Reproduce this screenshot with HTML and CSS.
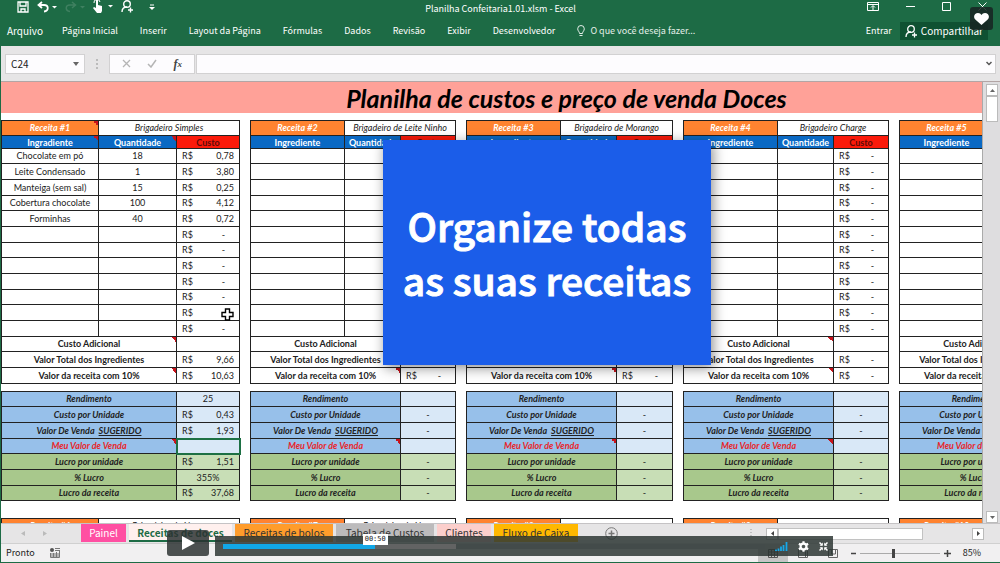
FILE: index.html
```html
<!DOCTYPE html>
<html lang="pt-BR">
<head>
<meta charset="utf-8">
<title>Planilha Confeitaria1.01.xlsm - Excel</title>
<link rel="stylesheet" href="styles.css">
</head>
<body>
<header class="top">
  <div class="titlebar">
    <div class="quick">
      <button class="ico" aria-label="Salvar"><svg width="12" height="12" viewBox="0 0 12 12"><path d="M1 1h10v10H1zM3 1v4h6V1M4 11V8h4v3" fill="none" stroke="#fff" stroke-width="1.3"/></svg></button>
      <button class="ico undo" aria-label="Desfazer"><svg width="20" height="12" viewBox="0 0 20 12"><path d="M5 1L1.500 4 5 7M2 4h5c5 0 5 6 0 6.500" fill="none" stroke="#fff" stroke-width="1.800"/><path d="M15 5h5l-2.500 2.500z" fill="#fff"/></svg></button>
      <button class="ico redo" aria-label="Refazer"><svg width="20" height="12" viewBox="0 0 20 12"><path d="M7 1l3.500 3L7 7M10 4H5C0 4 0 10 5 10.500" fill="none" stroke="#3f8060" stroke-width="1.500"/><path d="M15 5h5l-2.500 2.500z" fill="#3f8060"/></svg></button>
      <button class="ico" aria-label="Modo de toque"><svg width="20" height="13" viewBox="0 0 20 13"><path d="M3 0h2v5l4 1v5l-1 2H4L0 8l1-1 2 1z" fill="#fff"/><path d="M1 3a3 3 0 0 1 6-1" fill="none" stroke="#fff"/><path d="M15 5h5l-2.500 2.500z" fill="#fff"/></svg></button>
      <button class="ico" aria-label="Conta"><svg width="13" height="13" viewBox="0 0 13 13"><circle cx="6" cy="4" r="3.300" fill="none" stroke="#fff" stroke-width="1.400"/><path d="M1 12c0-3 2-5 5-5M7 10h5M9.500 7.500v5" fill="none" stroke="#fff" stroke-width="1.400"/></svg></button>
      <button class="ico" aria-label="Personalizar"><svg width="6" height="8" viewBox="0 0 6 8"><path d="M1 2h4" stroke="#fff"/><path d="M0 4h6L3 7z" fill="#fff"/></svg></button>
    </div>
    <h1 class="doc">Planilha Confeitaria1.01.xlsm - Excel</h1>
    <div class="win">
      <button class="ico" aria-label="Opções da faixa"><svg width="12" height="9" viewBox="0 0 12 9"><path d="M.5.5h11v8H.5zM.5 2.500h11M6 8V4M4 5.500l2-2 2 2" fill="none" stroke="#fff"/></svg></button>
      <button class="ico" aria-label="Minimizar"><svg width="9" height="9" viewBox="0 0 9 9"><path d="M0 4.500h9" stroke="#fff"/></svg></button>
      <button class="ico" aria-label="Maximizar"><svg width="9" height="9" viewBox="0 0 9 9"><path d="M.5.5h8v8h-8z" fill="none" stroke="#fff"/></svg></button>
      <button class="ico" aria-label="Fechar"><svg width="9" height="9" viewBox="0 0 9 9"><path d="M.5.5l8 8M8.500.5l-8 8" stroke="#fff"/></svg></button>
    </div>
  </div>
  <nav class="ribbon">
    <button class="file">Arquivo</button><button>Página Inicial</button><button>Inserir</button><button>Layout da Página</button><button>Fórmulas</button><button>Dados</button><button>Revisão</button><button>Exibir</button><button>Desenvolvedor</button>
    <button class="tell"><svg width="8" height="12" viewBox="0 0 8 12"><path d="M2.500 8.500C2.500 6.500.7 6 .7 3.800a3.300 3.300 0 0 1 6.600 0C7.300 6 5.500 6.500 5.500 8.500zM2.500 10.500h3" fill="none" stroke="#e4efe9"/></svg>O que você deseja fazer...</button>
    <button class="login">Entrar</button>
    <button class="share"><svg width="13" height="13" viewBox="0 0 13 13"><circle cx="6" cy="4" r="3.300" fill="none" stroke="#fff" stroke-width="1.300"/><path d="M1 12c0-3 2-5 5-5M7 10h5M9.500 7.500v5" fill="none" stroke="#fff" stroke-width="1.300"/></svg>Compartilhar</button>
  </nav>
</header>
<div class="formula">
  <div class="namebox"><input class="cellref" aria-label="Caixa de nome" value="C24"><svg width="6" height="4" viewBox="0 0 6 4"><path d="M0 0h6L3 4z" fill="#666"/></svg></div>
  <svg class="grip" width="2" height="10" viewBox="0 0 2 10"><path d="M1 0v2M1 4v2M1 8v2" stroke="#bbb" stroke-width="2"/></svg>
  <div class="fx">
    <button class="ico" aria-label="Cancelar"><svg width="9" height="9" viewBox="0 0 9 9"><path d="M1 1l7 7M8 1L1 8" stroke="#b5b5b5" stroke-width="1.300"/></svg></button>
    <button class="ico" aria-label="Inserir"><svg width="10" height="9" viewBox="0 0 10 9"><path d="M1 5l3 3 5-7" fill="none" stroke="#b5b5b5" stroke-width="1.500"/></svg></button>
    <button class="ico fn">f<small>x</small></button>
  </div>
  <div class="entry"><input aria-label="Barra de fórmulas"><svg width="6" height="5" viewBox="0 0 6 5"><path d="M.5 1L3 3.500 5.500 1" fill="none" stroke="#555" stroke-width="1.500"/></svg></div>
</div>
<main class="work">
  <section class="sheet">
    <h2 class="banner">Planilha de custos e preço de venda Doces</h2>
    <div class="recipes" id="recipes"></div>
    <svg class="cursor" width="13" height="13" viewBox="0 0 13 13"><path d="M4.500 1h4v3.500H12v4H8.500V12h-4V8.500H1v-4h3.500z" fill="#fff" stroke="#000" stroke-width="1.400"/></svg>
  </section>
  <div class="vscroll">
    <button class="arrow" aria-label="Subir"><svg width="5" height="3" viewBox="0 0 5 3"><path d="M0 3h5L2.500 0z" fill="#666"/></svg></button>
    <div class="vthumb"></div>
    <button class="arrow down" aria-label="Descer"><svg width="5" height="3" viewBox="0 0 5 3"><path d="M0 0h5L2.500 3z" fill="#666"/></svg></button>
  </div>
  <p class="callout">Organize todas<br>as suas receitas</p>
</main>
<nav class="tabs">
  <div class="steps"><button class="ico" aria-label="Anterior"><svg width="4" height="5" viewBox="0 0 4 5"><path d="M4 0v5L0 2.500z" fill="#bbb"/></svg></button><button class="ico" aria-label="Próxima"><svg width="4" height="5" viewBox="0 0 4 5"><path d="M0 0v5l4-2.500z" fill="#bbb"/></svg></button></div>
  <button class="tab painel">Painel</button><button class="tab doces">Receitas de doces</button><button class="tab bolos">Receitas de bolos</button><button class="tab custos">Tabela de Custos</button><button class="tab clientes">Clientes</button><button class="tab fluxo">Fluxo de Caixa</button>
  <button class="ico add" aria-label="Nova planilha"><svg width="13" height="13" viewBox="0 0 13 13"><circle cx="6.500" cy="6.500" r="5.800" fill="none" stroke="#777"/><path d="M3.500 6.500h6M6.500 3.500v6" stroke="#777" stroke-width="1.500"/></svg></button>
  <svg class="hgrip" width="2" height="7" viewBox="0 0 2 7"><path d="M1 0v1M1 3v1M1 6v1" stroke="#999"/></svg>
  <div class="hscroll">
    <button class="arrow" aria-label="Esquerda"><svg width="3" height="5" viewBox="0 0 3 5"><path d="M3 0v5L0 2.500z" fill="#444"/></svg></button><div class="hthumb"></div>
    <button class="arrow right" aria-label="Direita"><svg width="3" height="5" viewBox="0 0 3 5"><path d="M0 0v5l3-2.500z" fill="#444"/></svg></button>
  </div>
</nav>
<footer class="status">
  <span>Pronto</span>
  <svg class="macro" width="10" height="10" viewBox="0 0 10 10"><circle cx="2" cy="2" r="2" fill="#555"/><path d="M5 .5h5M5 2.500h5M.5 5v4.500h9V3M1 6h8M1 8h8M3.500 5v4M6.500 4v5" fill="none" stroke="#777"/></svg>
  <div class="views">
    <button class="ico view on" aria-label="Normal"><svg width="10" height="9" viewBox="0 0 10 9"><path d="M.5.5h9v8h-9zM3.500 0v9M6.500 0v9M0 3h10M0 6h10" fill="none" stroke="#555"/></svg></button>
    <button class="ico view" aria-label="Layout da Página"><svg width="10" height="9" viewBox="0 0 10 9"><path d="M.5.5h9v8h-9zM2.500 2.500h5v6" fill="none" stroke="#666"/></svg></button>
    <button class="ico view" aria-label="Quebra de página"><svg width="10" height="9" viewBox="0 0 10 9"><path d="M.5.5h9v8h-9zM3.500 0v5h4V0" fill="none" stroke="#666"/></svg></button>
  </div>
  <div class="zoom">
    <button class="ico" aria-label="Menos zoom"><svg width="5" height="5" viewBox="0 0 5 5"><path d="M0 2.500h5" stroke="#444" stroke-width="1.500"/></svg></button>
    <input type="range" min="0" max="100" value="42" aria-label="Zoom">
    <button class="ico" aria-label="Mais zoom"><svg width="7" height="7" viewBox="0 0 7 7"><path d="M0 3.500h7M3.500 0v7" stroke="#444" stroke-width="1.500"/></svg></button>
    <span class="pct">85%</span>
  </div>
</footer>
<button class="like" aria-label="Curtir"><svg width="15" height="12" viewBox="0 0 15 12"><path d="M7.500 12L1.300 6.500C-1.500 3.500 1 0 4 0c1.600 0 2.800.8 3.500 2C8.200.8 9.400 0 11 0c3 0 5.500 3.500 2.700 6.500z" fill="#fff"/></svg></button>
<div class="player">
  <button class="play" aria-label="Reproduzir"><svg width="13" height="14" viewBox="0 0 13 14"><path d="M0 0l13 7-13 7z" fill="#fff"/></svg></button>
  <div class="bar">
    <div class="track"><div class="loaded"></div><div class="played"><output class="time">00:50</output></div></div>
    <button class="ico" aria-label="Volume"><svg width="13" height="9" viewBox="0 0 13 9"><path d="M1 9V7.500M3.500 9V6.500M6 9V4.500M8.500 9V3M11.500 9V0" stroke="#17a9ea" stroke-width="1.800"/></svg></button>
    <button class="ico" aria-label="Configurações"><svg width="11" height="11" viewBox="-5.500 -5.500 11 11"><circle r="2.900" fill="none" stroke="#fff" stroke-width="2.200"/><path d="M0-5.300v2M0 3.300v2M-4.600-2.700l1.700 1M2.900 1.700l1.700 1M-4.600 2.700l1.700-1M2.900-1.700l1.700-1" stroke="#fff" stroke-width="2.200"/></svg></button>
    <button class="ico" aria-label="Sair da tela cheia"><svg width="9" height="9" viewBox="0 0 9 9"><path d="M.5.5L3 3M8.500.5L6 3M.5 8.500L3 6M8.500 8.500L6 6" stroke="#fff" stroke-width="1.500"/><path d="M3.800.6v3.200H.6zM5.200.6v3.200h3.200zM3.800 8.400V5.200H.6zM5.200 8.400V5.200h3.200z" fill="#fff"/></svg></button>
  </div>
</div>
<script src="script.js"></script>
</body>
</html>
```
FILE: styles.css
```css
* { box-sizing: border-box; }
body {
  margin: 0; height: 100vh; position: relative; overflow: hidden;
  display: flex; flex-direction: column;
  border-left: 1px solid #1d6b45; border-bottom: 1px solid #1d6b45;
  background: #e6e5e6; color: #222;
  font: 9px/14px "Noto Sans CJK SC", "Open Sans", sans-serif;
}
button, input { font: inherit; color: inherit; margin: 0; padding: 0; border: 0; background: none; }
button { white-space: nowrap; }
svg { display: block; flex: none; }
h1, h2, p { margin: 0; font-weight: 400; }
.ico { display: flex; align-items: center; justify-content: center; }

.top { background: #1d6b45; color: #fff; flex: none; }
.titlebar { display: grid; grid-template-columns: 1fr auto 1fr; height: 18px; }
.quick { display: flex; gap: 8px; padding-left: 16px; height: 13px; align-items: center; }
.quick .ico:last-child { margin-left: 7px; }
.doc { font-size: 9px; line-height: 18px; }
.win { display: flex; justify-content: flex-end; gap: 27px; padding-right: 13px; height: 13px; align-items: center; }
.ribbon { display: flex; align-items: center; gap: 22px; height: 28px; padding: 0 12px 2px 6px; }
.file { font-size: 10px; margin-right: -3px; }
.tell { display: flex; align-items: center; gap: 5px; color: #e4efe9; }
.login { margin-left: auto; }
.share { display: flex; align-items: center; gap: 3px; height: 18px; padding: 0 5px; background: #0f5132; margin-left: -14px; font-size: 10px; }

.formula { display: flex; align-items: center; height: 36px; padding: 0 4px; flex: none; border-bottom: 1px solid #b3a5a5; }
.namebox, .fx, .entry { display: flex; align-items: center; height: 20px; background: #fdfcfe; border: 1px solid #d2d1d2; }
.namebox { width: 80px; padding: 0 5px; }
.cellref { flex: 1; min-width: 0; font-size: 10px; }
.formula .grip { margin: 0 11px; }
.fx { width: 86px; justify-content: space-around; padding: 0 4px; margin-right: 1px; }
.fn { font: italic bold 12px/14px "Liberation Serif", serif; color: #444; }
.fn small { font-size: 9px; }
.entry { flex: 1; padding-right: 3px; }
.entry input { flex: 1; }

.work { flex: 1; min-height: 0; display: flex; position: relative; }
.sheet { flex: 1; min-width: 0; overflow: hidden; background: #fff; position: relative; border-right: 1px solid #aaa; font-family: Lato, sans-serif; }
.banner { height: 31px; background: #ffa198; padding-left: 150px; text-align: center; font: italic bold 25px/32px Lato, sans-serif; color: #000; }
.recipes { display: flex; gap: 10px; padding-top: 7px; }
.recipe { flex: none; }
.recipe table { width: 100%; table-layout: fixed; border-collapse: collapse; margin-bottom: 7px; }
.recipe table.result { margin-bottom: 17px; }
.r1 { width: 239px; } .r2, .r4, .r5 { width: 206px; } .r3 { width: 207px; }
.c1 { width: 94px; } .c2 { width: 56px; }
.r1 .c1 { width: 97px; } .r1 .c2 { width: 78px; }
td, th { border: 1px solid #222; padding: 0; text-align: center; line-height: 12px; font-size: 9px; font-weight: 400; white-space: nowrap; overflow: hidden; }
tr { height: 16px; }
tbody tr:nth-child(3n+1) { height: 15px; }
thead tr:first-child { height: 15px; }
thead tr + tr { height: 13px; }
thead tr + tr th { line-height: 11px; font-weight: 700; color: #fff; background-color: #0a69c4; }
thead .num { background-color: #ff8330; color: #fff; font-style: italic; font-weight: 700; }
thead .name { font-style: italic; }
thead tr + tr th.cost { background-color: #fb1a0a; color: #5c0b08; }
.label { font-weight: 700; padding-bottom: 1px; line-height: 11px; }
.result .label { font-style: italic; background-color: #97c0ea; }
.result td { background: #d9e8f7; }
.result .gain .label { background-color: #a8c88c; }
.result .gain td { background: #c8deb6; }
.result .mine .label { color: #e8262b; }
.note { background-image: linear-gradient(225deg, #c8141c 50%, transparent 50%); background-size: 5px 5px; background-position: right top; background-repeat: no-repeat; }
.money { display: flex; justify-content: space-between; padding: 0 5px; }
.money.nil { padding-right: 14px; }
.result td.picked { outline: 2px solid #1d7044; outline-offset: -1px; }
.cursor { position: absolute; left: 220px; top: 226px; }

.vscroll { width: 17px; padding: 2px 2px 0 3px; display: flex; flex-direction: column; background: #dedddf; }
.arrow { display: flex; align-items: center; justify-content: center; flex: none; background: #fff; border: 1px solid #bbb; width: 12px; height: 12px; }
.vthumb { height: 26px; background: #fff; border: 1px solid #bbb; }
.down { margin-top: auto; }
.callout {
  position: absolute; left: 382px; top: 58px; width: 328px; height: 225px; padding-top: 58px;
  background: #1b5de9; color: #fff; text-align: center; box-shadow: 2px 3px 12px rgba(0,0,0,.45);
  font: 500 39px/54px "Noto Sans CJK SC", sans-serif; -webkit-text-stroke: 1px #fff;
}

.tabs { display: flex; gap: 3px; height: 20px; flex: none; align-items: stretch; border-top: 1px solid #c5c3c5; font-size: 10px; }
.steps { width: 77px; display: flex; gap: 18px; justify-content: center; padding-right: 12px; }
.tab { padding: 0; line-height: 18px; color: #333; height: 18px; }
.painel { width: 45px; background: #ff4fa2; color: #fff; }
.doces { width: 103px; background: #fff0ee; color: #1d6b45; font-weight: 700; border-bottom: 2px solid #1d6b45; }
.bolos { width: 98px; background: #ff9c2b; }
.custos { width: 98px; background: #bcbbbc; }
.clientes { width: 54px; background: #fccfcc; }
.fluxo { width: 84px; background: #ffb800; }
.add { margin-left: 24px; }
.hgrip { margin: 5px 11px 0 auto; }
.hscroll { display: flex; align-items: center; width: 218px; margin-right: 16px; }
.hthumb { width: 145px; height: 12px; background: #fff; border: 1px solid #c2c2c2; }
.right { margin-left: auto; }

.status { display: flex; align-items: center; height: 19px; padding: 0 19px 0 5px; flex: none; background: #f1f0f1; border-top: 1px solid #d0d0d0; }
.macro { margin-left: 15px; }
.views { display: flex; margin-left: auto; height: 18px; }
.view { width: 30px; }
.on { background: #c6c6c6; }
.zoom { display: flex; align-items: center; gap: 4px; padding-left: 3px; }
.zoom input { appearance: none; width: 80px; height: 9px; background: linear-gradient(#aaa, #aaa) center / 100% 1px no-repeat; }
.zoom input::-webkit-slider-thumb { appearance: none; width: 3px; height: 9px; background: #444; }
.pct { margin-left: 8px; }

.like { position: absolute; right: 7px; top: 7px; width: 23px; height: 23px; border-radius: 3px; background: rgba(23,35,34,.85); display: grid; place-items: center; }
.player { position: absolute; left: 166px; right: 167px; bottom: 6px; display: flex; align-items: flex-end; gap: 6px; }
.play { width: 42px; height: 26px; border-radius: 3px; background: rgba(43,49,49,.84); display: grid; place-items: center; }
.bar { flex: 1; height: 20px; display: flex; align-items: center; gap: 10px; padding: 0 5px 0 8px; background: rgba(43,52,50,.84); }
.track { flex: 1; height: 5px; position: relative; background: #434b4a; }
.loaded { position: absolute; width: 43%; height: 5px; background: #626363; }
.played { position: relative; width: 28%; height: 5px; background: #12a7e6; }
.time { position: absolute; right: -13px; bottom: 4px; padding: 0 2px; background: #fff; color: #222; font: 7px/11px "DejaVu Sans Mono", monospace; }
```
FILE: script.js
```js
const recipes = [
  { name: "Brigadeiro Simples", first: "Ingradiente", notes: true,
    items: [["Chocolate em pó", 18, "0,78"], ["Leite Condensado", 1, "3,80"], ["Manteiga (sem sal)", 15, "0,25"],
            ["Cobertura chocolate", 100, "4,12"], ["Forminhas", 40, "0,72"]],
    total: "9,66", extra: "10,63", result: ["25", "R0,43", "R1,93", "", "R1,51", "355%", "R37,68"] },
  { name: "Brigadeiro de Leite Ninho" },
  { name: "Brigadeiro de Morango" },
  { name: "Brigadeiro Charge" },
  { name: "" }
];

const labels = ["Rendimento", "Custo por Unidade", "Valor De Venda &nbsp;<u>SUGERIDO</u>", "Meu Valor de Venda",
  "Lucro por unidade", "% Lucro", "Lucro da receita"];
const money = v => `<div class="money${v ? "" : " nil"}"><span>R$</span><span>${v || "-"}</span></div>`;
const cols = '<colgroup><col class="c1"><col class="c2"><col></colgroup>';

function head(n, name, note) {
  return `<tr><th class="num${note}">Receita #${n}</th><th class="name" colspan="2">${name}</th></tr>`;
}

function card(r, i) {
  const note = r.notes ? " note" : "";
  const items = r.items || [];
  let rows = "";
  for (let k = 0; k < 12; k++) {
    const [a, b, c] = items[k] || ["", "", ""];
    rows += `<tr><td>${a}</td><td>${b}</td><td>${money(c)}</td></tr>`;
  }
  const sum = (t, v, n) => `<tr><th class="label${n}" colspan="2">${t}</th><td>${v}</td></tr>`;
  rows += sum("Custo Adicional", "", " note") + sum("Valor Total dos Ingredientes", money(r.total), "")
    + sum("Valor da receita com 10%", money(r.extra), " note");
  const values = r.result || ["", "-", "-", "", "-", "-", "-"];
  const result = labels.map((t, k) => {
    const v = values[k];
    const cls = k > 3 ? "gain" : k === 3 ? "mine" : "";
    return `<tr class="${cls}"><th class="label${k === 3 ? " note" : ""}" colspan="2">${t}</th>` +
      `<td class="${k === 3 && i === 0 ? "picked" : ""}">${v[0] === "R" ? money(v.slice(1)) : v}</td></tr>`;
  }).join("");
  return `<div class="recipe r${i + 1}">
    <table>${cols}<thead>${head(i + 1, r.name, note)}<tr><th class="${note}">${r.first || "Ingrediente"}</th><th class="${note}">Quantidade</th><th class="cost">Custo</th></tr></thead><tbody>${rows}</tbody></table>
    <table class="result">${cols}<tbody>${result}</tbody></table>
    <table>${cols}<thead>${head(i + 6, i < 2 ? "Brigadeiro de Nozes" : "", "")}</thead></table>
  </div>`;
}

document.getElementById("recipes").innerHTML = recipes.map(card).join("");
```
